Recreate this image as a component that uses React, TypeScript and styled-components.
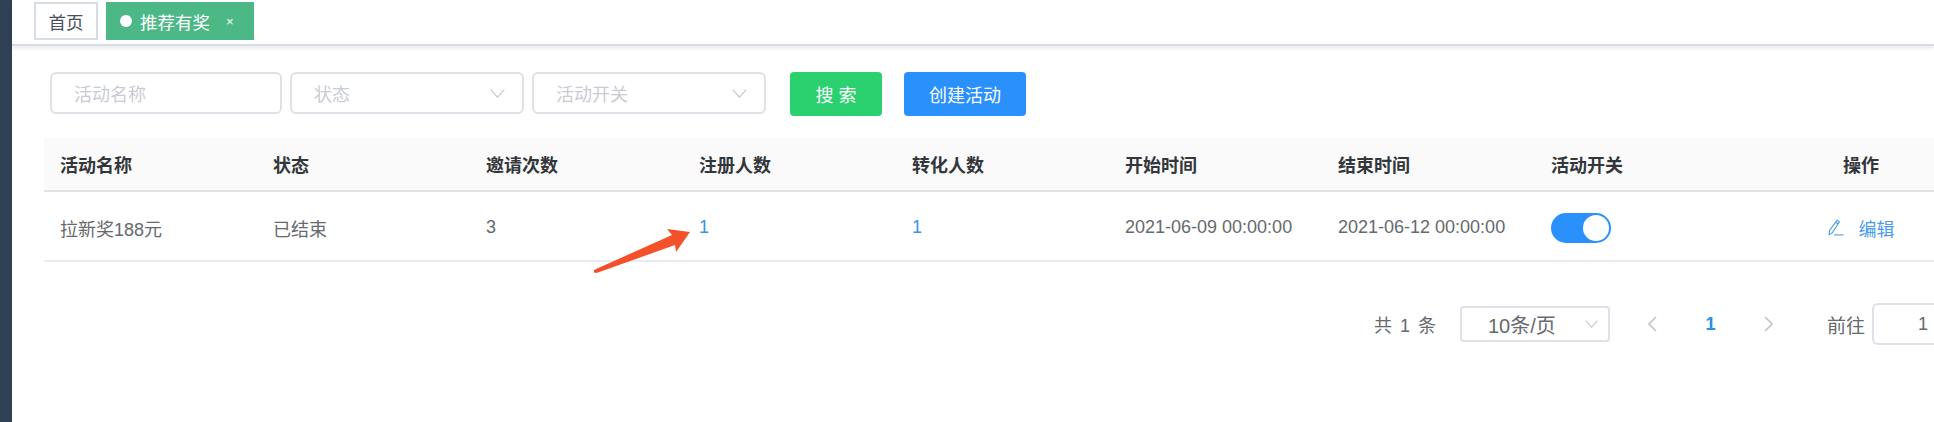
import styled, { createGlobalStyle } from 'styled-components';

const GlobalStyle = createGlobalStyle`
	html, body {
		margin: 0;
		padding: 0;
		background: #fff;
		overflow: hidden;
	}
	body {
		font-family: "Liberation Sans", "Noto Sans CJK SC", sans-serif;
	}
`;

const Page = styled.div`
	display: flex;
	width: 1934px;
	height: 422px;
	overflow: hidden;
	position: relative;
`;
const Sidebar = styled.aside`
	width: 12px;
	flex-shrink: 0;
	background: #304156;
`;
const Main = styled.main`
	flex: 1;
	min-width: 0;
`;
const TabBar = styled.nav`
	display: flex;
	gap: 8px;
	height: 46px;
	padding: 2px 0 0 22px;
	box-sizing: border-box;
	border-bottom: 2px solid #d8dce5;
	box-shadow: 0 2px 4px rgba(0, 21, 41, 0.1);
`;
const Tab = styled.div<{ $active?: boolean }>`
	display: flex;
	align-items: center;
	height: 38px;
	box-sizing: border-box;
	font-size: 17.5px;
	color: ${(p) => (p.$active ? '#fff' : '#495060')};
	background: ${(p) => (p.$active ? '#4cb886' : '#fff')};
	border: 2px solid ${(p) => (p.$active ? '#4cb886' : '#d8dce5')};
	padding: ${(p) => (p.$active ? '0 18px 0 12px' : '0 12.5px')};
`;
const Dot = styled.i`
	width: 12px;
	height: 12px;
	border-radius: 50%;
	background: #fff;
	margin-right: 8px;
`;
const TabClose = styled.span`
	font-size: 13px;
	margin-left: 16px;
	line-height: 1;
`;
const Content = styled.section`
	width: 1930px;
	padding: 26px 0 0 32px;
`;
const FilterRow = styled.div`
	display: flex;
	align-items: flex-start;
	margin-left: 6px;
	height: 66px;
`;
const Field = styled.div<{ $width: number }>`
	display: flex;
	align-items: center;
	justify-content: space-between;
	width: ${(p) => p.$width}px;
	height: 42px;
	margin-right: 8px;
	padding: 0 17px 0 22px;
	box-sizing: border-box;
	border: 2px solid #dfe1e8;
	border-radius: 6px;
	font-size: 18px;
	color: #c9ccd3;
`;
const Button = styled.button<{ $bg: string; $width: number; $left: number }>`
	width: ${(p) => p.$width}px;
	height: 44px;
	margin-left: ${(p) => p.$left}px;
	border: 0;
	border-radius: 4px;
	background: ${(p) => p.$bg};
	color: #fff;
	font: inherit;
	font-size: 18px;
	padding: 0;
`;
const Table = styled.table`
	width: 1930px;
	border-collapse: collapse;
	table-layout: fixed;
	font-size: 18px;
`;
const Th = styled.th<{ $center?: boolean }>`
	height: 52px;
	padding: 0 16px;
	background: #fafafa;
	border-bottom: 2px solid #e0e3e8;
	color: #33363a;
	font-weight: 700;
	text-align: ${(p) => (p.$center ? 'center' : 'left')};
`;
const Td = styled.td<{ $link?: boolean }>`
	height: 70px;
	padding: 3px 16px 0;
	box-sizing: border-box;
	border-bottom: 2px solid #e8ebf1;
	color: ${(p) => (p.$link ? '#3a93e6' : '#66696d')};
	white-space: nowrap;
`;
const Switch = styled.span`
	display: block;
	width: 60px;
	height: 30px;
	border-radius: 15px;
	background: #2a90fb;
	position: relative;
	&::after {
		content: '';
		position: absolute;
		top: 2px;
		right: 2px;
		width: 26px;
		height: 26px;
		border-radius: 50%;
		background: #fff;
	}
`;
const EditLink = styled.span`
	display: flex;
	align-items: center;
	justify-content: center;
	gap: 15px;
	color: #4a9bea;
`;
const Pager = styled.div`
	display: flex;
	align-items: center;
	justify-content: flex-end;
	margin-top: 41px;
	height: 42px;
	font-size: 18px;
	color: #66696d;
`;
const Total = styled.span`
	margin-right: 24px;
	word-spacing: 3px;
`;
const PageSize = styled.div`
	display: flex;
	align-items: center;
	justify-content: space-between;
	width: 150px;
	height: 36px;
	box-sizing: border-box;
	padding: 0 10px 0 26px;
	border: 2px solid #dfe1e8;
	border-radius: 4px;
	margin-right: 38px;
	font-size: 20px;
`;
const PageNav = styled.div`
	display: flex;
	align-items: center;
	width: 125px;
	justify-content: space-between;
	margin-right: 54px;
`;
const CurrentPage = styled.b`
	color: #2a90e8;
`;
const GotoLabel = styled.span`
	font-size: 19px;
`;
const GotoInput = styled.div`
	display: flex;
	align-items: center;
	justify-content: center;
	width: 102px;
	height: 42px;
	box-sizing: border-box;
	margin-left: 7px;
	border: 2px solid #dfe1e8;
	border-radius: 6px;
`;
const ArrowMark = styled.svg`
	position: absolute;
	left: 590px;
	top: 224px;
`;

const Chevron = ({ size = 15, color = '#c6c9d0' }: { size?: number; color?: string }) => (
	<svg width={size} height={size * 0.6} viewBox="0 0 15 9" fill="none">
		<path d="M.7.7 7.5 8.2 14.3.7" stroke={color} strokeWidth="1.2" />
	</svg>
);

const PagerArrow = ({ flip }: { flip?: boolean }) => (
	<svg width="9" height="16" viewBox="0 0 9 16" fill="none">
		<path d={flip ? 'M1 1l7 7-7 7' : 'M8 1 1 8l7 7'} stroke="#c0c4cc" strokeWidth="1.6" />
	</svg>
);

const Pencil = () => (
	<svg width="16" height="17" viewBox="0 0 16 17" fill="none" stroke="#4a9bea" strokeWidth="1.1">
		<path d="M9 1.2 11.4 3 4.4 13.6 1.2 15.6 1.4 11.8Z" />
		<path d="M7.6 3.2 10 5" />
		<path d="M6 15.9h9.5" />
	</svg>
);

const columns = ['活动名称', '状态', '邀请次数', '注册人数', '转化人数', '开始时间', '结束时间', '活动开关'];

export default function App() {
	return (
		<Page>
			<GlobalStyle />
			<Sidebar />
			<Main>
				<TabBar>
					<Tab>首页</Tab>
					<Tab $active>
						<Dot />
						推荐有奖
						<TabClose>×</TabClose>
					</Tab>
				</TabBar>
				<Content>
					<FilterRow>
						<Field $width={232}>活动名称</Field>
						<Field $width={234}>
							状态
							<Chevron />
						</Field>
						<Field $width={234}>
							活动开关
							<Chevron />
						</Field>
						<Button $bg="#2bd06f" $width={92} $left={16}>
							搜 索
						</Button>
						<Button $bg="#2a90fb" $width={122} $left={22}>
							创建活动
						</Button>
					</FilterRow>
					<Table>
						<colgroup>
							{columns.map((c) => (
								<col key={c} width={213} />
							))}
							<col width={226} />
						</colgroup>
						<thead>
							<tr>
								{columns.map((c) => (
									<Th key={c}>{c}</Th>
								))}
								<Th $center>操作</Th>
							</tr>
						</thead>
						<tbody>
							<tr>
								<Td>拉新奖188元</Td>
								<Td>已结束</Td>
								<Td>3</Td>
								<Td $link>1</Td>
								<Td $link>1</Td>
								<Td>2021-06-09 00:00:00</Td>
								<Td>2021-06-12 00:00:00</Td>
								<Td>
									<Switch />
								</Td>
								<Td>
									<EditLink>
										<Pencil />
										编辑
									</EditLink>
								</Td>
							</tr>
						</tbody>
					</Table>
					<Pager>
						<Total>共 1 条</Total>
						<PageSize>
							10条/页
							<Chevron size={13} />
						</PageSize>
						<PageNav>
							<PagerArrow />
							<CurrentPage>1</CurrentPage>
							<PagerArrow flip />
						</PageNav>
						<GotoLabel>前往</GotoLabel>
						<GotoInput>1</GotoInput>
					</Pager>
				</Content>
			</Main>
			<ArrowMark width="104" height="50" viewBox="0 0 104 50">
				<path d="M5 45.5 82 11 77 5 100 8 86 28 85 21 8 48.5C4 50 2.5 47 5 45.5Z" fill="#f4502a" />
			</ArrowMark>
		</Page>
	);
}
